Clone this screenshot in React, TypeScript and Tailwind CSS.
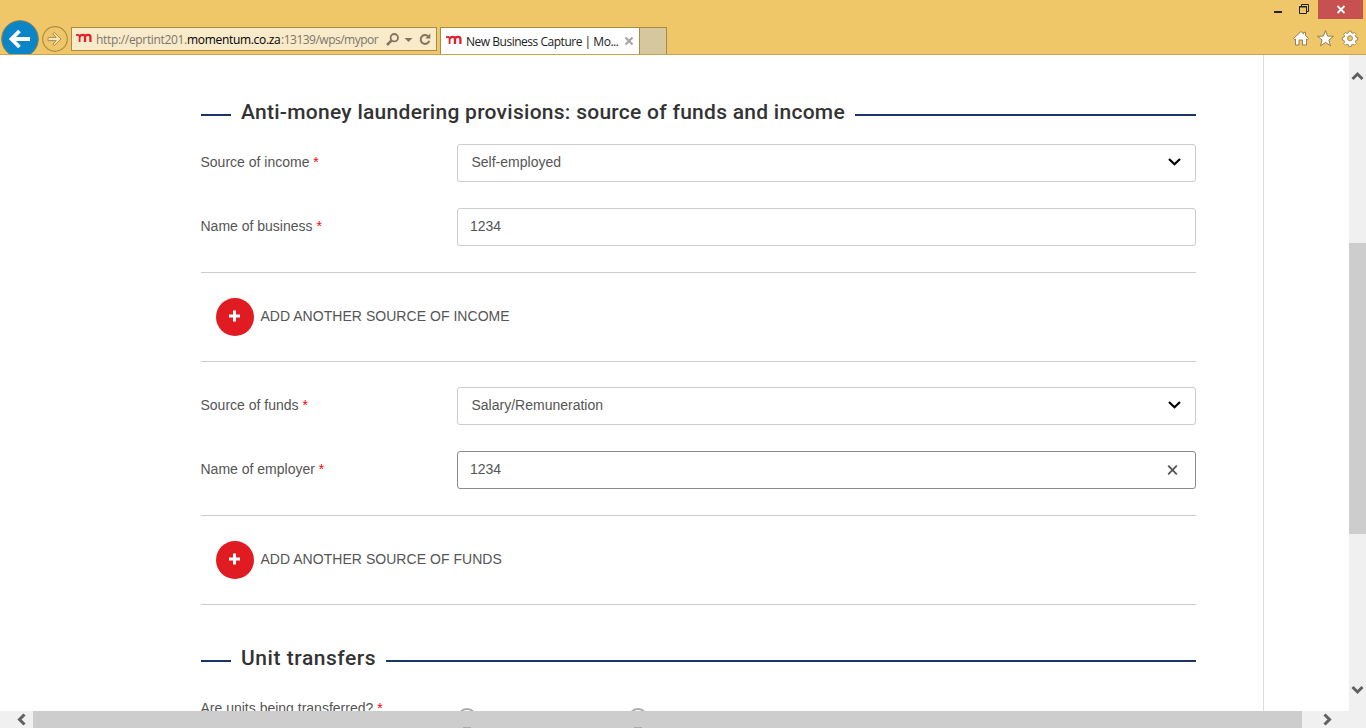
import React from "react";

function MLogo() {
  return (
    <svg width="16" height="16" viewBox="0 0 16 16" className="shrink-0" fill="none" stroke="#e2202c">
      <path d="M0 4.4 C1.4 3.4 3.2 3.6 3.6 5.4 V11" strokeWidth="1.8" />
      <path d="M3.8 5.8 C4.6 3.2 9 3.2 9 6 V11 M9 6 C9.8 3.2 14.4 3.2 14.4 6 V11" strokeWidth="2.3" />
    </svg>
  );
}

function Toolbar() {
  return (
    <header className="relative h-[55px] shrink-0 overflow-hidden border-b border-[#c9a350] bg-[#efc768]">
      <div className="absolute top-0 right-0 flex h-[19px]">
        <svg width="48" height="19" viewBox="1270 0 48 19" fill="none" stroke="#222">
          <path d="M1274 12h8" strokeWidth="2" />
          <path d="M1299.5 6.5h7v7h-7z" />
          <path d="M1299 7h8" strokeWidth="1" />
          <path d="M1301.5 6v-1.5h7v7h-1.5" />
        </svg>
        <div className="w-[45px] bg-[#c75050]">
          <svg width="45" height="19" viewBox="0 0 45 19" fill="none" stroke="#fff" strokeWidth="1.8">
            <path d="M19.5 6l7 7M26.5 6l-7 7" />
          </svg>
        </div>
        <div className="w-[3px]" />
      </div>
      <div className="flex h-[54px] pt-[20px]">
        <svg width="71" height="34" viewBox="0 20 71 34" className="shrink-0" fill="none">
          <circle cx="20" cy="39" r="18.3" fill="#0a85c7" stroke="#8a7c4c" strokeWidth="1" />
          <path d="M30 39H12M19.5 31l-8 8 8 8" stroke="#fff" strokeWidth="3.8" />
          <circle cx="55" cy="39" r="12.3" stroke="#ad8c48" strokeWidth="1.2" />
          <path d="M48 37.4h8.2l-3.4-3.7 1.5-1.3 6.6 6.6-6.6 6.6-1.5-1.3 3.4-3.7H48z" fill="#f8e6bb" stroke="#ae8d49" />
        </svg>
        <div className="mt-[7px] flex h-[24px] w-[366px] shrink-0 items-center border border-[#a98a47] bg-[#f9eaca] pl-[4px]">
          <MLogo />
          <div className="ml-[4px] flex h-[20px] w-[285px] shrink-0 overflow-hidden font-['Open_Sans','Noto_Sans',sans-serif] text-[12px] leading-[21px] whitespace-nowrap text-[#7b776b]">
            <span className="w-[91px] shrink-0 tracking-[-0.33px]">http://eprtint201.</span>
            <span className="w-[94px] shrink-0 tracking-[-0.32px] text-black">momentum.co.za</span>
            <span className="shrink-0 tracking-[-0.5px]">:13139/wps/mypor</span>
          </div>
          <svg width="50" height="22" viewBox="381 28 50 22" fill="none" stroke="#80755e">
            <circle cx="394.3" cy="37.7" r="3.7" strokeWidth="1.8" />
            <path d="M391.6 40.4L387 45" strokeWidth="2.6" />
            <path d="M404.5 38h8l-4 4z" fill="#80755e" stroke="none" />
            <path d="M428.3 36.5a4.4 4.4 0 1 0 1 4.2" strokeWidth="2" />
            <path d="M430.3 33.5v5h-5z" fill="#80755e" stroke="none" />
          </svg>
        </div>
        <div className="mt-[7px] ml-[3px] flex h-[27px] w-[200px] shrink-0 items-center border border-b-0 border-[#a98a47] bg-white pl-[5px]">
          <MLogo />
          <span className="ml-[4px] w-[154px] shrink-0 pt-[2px] font-['Open_Sans','Noto_Sans',sans-serif] text-[12px] leading-[20px] tracking-[-0.48px] whitespace-nowrap text-[#222]">New Business Capture | Mo...</span>
          <svg width="14" height="14" viewBox="0 0 14 14" className="shrink-0" stroke="#a6a6a6" strokeWidth="2.2">
            <path d="M5.5 3.5l7 7M12.5 3.5l-7 7" />
          </svg>
        </div>
        <div className="mt-[7px] h-[27px] w-[27px] border-t border-r border-[#a98a47] bg-[#d7c79f]" />
        <svg width="74" height="34" viewBox="1292 20 74 34" className="ml-auto" fill="#fff" stroke="#94804f">
          <path d="M1293.5 38.5l7.5-7 2.5 2.3v-1.5h2v3.3l3 2.9-1.2 1.2-.8-.7v6h-4v-5h-3.5v5h-3.5v-6l-.8.7z" />
          <path d="M1325.5 30.5l2.1 5.6 5.9.2-4.6 3.7 1.6 5.8-5-3.3-5 3.3 1.6-5.8-4.6-3.7 5.9-.2z" />
          <g transform="translate(1350 38) scale(.87) translate(-1350 -38.7)">
            <path d="M1348.5 30.8h3l.4 2 1.6.7 1.7-1.2 2.1 2.1-1.2 1.7.7 1.6 2 .4v3l-2 .4-.7 1.6 1.2 1.7-2.1 2.1-1.7-1.2-1.6.7-.4 2h-3l-.4-2-1.6-.7-1.7 1.2-2.1-2.1 1.2-1.7-.7-1.6-2-.4v-3l2-.4.7-1.6-1.2-1.7 2.1-2.1 1.7 1.2 1.6-.7z" />
            <circle cx="1350" cy="39" r="2.9" fill="#efc768" />
          </g>
        </svg>
      </div>
    </header>
  );
}

function Heading({ children, className }: { children: React.ReactNode; className: string }) {
  return (
    <div className="flex h-[30px] items-center">
      <div className="mt-[5px] h-[2px] w-[30px] bg-[#1a3668]" />
      <h2 className={"mx-[10px] shrink-0 font-['Roboto',sans-serif] text-[21px] leading-[30px] font-medium whitespace-nowrap text-[#333] " + className}>{children}</h2>
      <div className="mt-[5px] h-[2px] flex-1 bg-[#1a3668]" />
    </div>
  );
}

function Label({ children }: { children: React.ReactNode }) {
  return (
    <label className="-ml-[0.5px] w-[256.5px] shrink-0 leading-[36px]">
      {children} <span className="text-[#f00]">*</span>
    </label>
  );
}

function Field({ label, value, kind = "text" }: { label: string; value: string; kind?: "text" | "select" | "active" }) {
  return (
    <div className="flex h-[38px]">
      <Label>{label}</Label>
      <div className={"flex flex-1 justify-between rounded-[3px] border leading-[34px] " + (kind === "active" ? "border-[#8a8a8a]" : "border-[#ccc]") + (kind === "select" ? " pl-[13.5px]" : " pl-[12px]")}>
        <span>{value}</span>
        {kind === "select" && (
          <svg width="30" height="36" viewBox="0 0 30 36" fill="none" stroke="#000" strokeWidth="2.2">
            <path d="M4 14l5.5 5.3 5.5-5.3" />
          </svg>
        )}
        {kind === "active" && (
          <svg width="30" height="36" viewBox="0 0 30 36" fill="none" stroke="#555" strokeWidth="1.8">
            <path d="M3.2 13.7l8.6 8.6M11.8 13.7l-8.6 8.6" />
          </svg>
        )}
      </div>
    </div>
  );
}

function AddRow({ children }: { children: React.ReactNode }) {
  return (
    <div className="my-[26px] flex h-[90px] items-center border-y border-[#ccc] pl-[15px]">
      <button className="flex items-center gap-[6px]">
        <svg width="38" height="38" viewBox="0 0 38 38">
          <circle cx="19" cy="19" r="19" fill="#e01b22" />
          <path d="M13 18h11M18.5 12.5v11" stroke="#fff" strokeWidth="3" />
        </svg>
        <span className="pb-px pl-[0.4px] tracking-[0.04px]">{children}</span>
      </button>
    </div>
  );
}

function Form() {
  return (
    <main className="w-[1264px] shrink-0 overflow-hidden border-r border-[#ddd] pr-[67px] pl-[201px] pt-[42px]">
      <Heading className="tracking-[0.27px]">Anti-money laundering provisions: source of funds and income</Heading>
      <div className="mt-[17px]">
        <Field label="Source of income" value="Self-employed" kind="select" />
        <div className="h-[26px]" />
        <Field label="Name of business" value="1234" />
        <AddRow>ADD ANOTHER SOURCE OF INCOME</AddRow>
      </div>
      <div className="-mt-px">
        <Field label="Source of funds" value="Salary/Remuneration" kind="select" />
        <div className="h-[26px]" />
        <Field label="Name of employer" value="1234" kind="active" />
        <AddRow>ADD ANOTHER SOURCE OF FUNDS</AddRow>
      </div>
      <div className="mt-[38px]">
        <Heading className="tracking-[0.55px]">Unit transfers</Heading>
      </div>
      <div className="mt-[17px] flex h-[38px]">
        <Label>Are units being transferred?</Label>
        <div className="mt-[18px] h-[20px] w-[20px] rounded-full border-2 border-[#aaa]" />
        <div className="mt-[18px] ml-[151px] h-[20px] w-[20px] rounded-full border-2 border-[#aaa]" />
      </div>
    </main>
  );
}

export default function App() {
  return (
    <div className="flex h-[728px] w-[1366px] flex-col overflow-hidden bg-white font-['Liberation_Sans',Arial,sans-serif] text-[14px] text-[#555]">
      <Toolbar />
      <div className="flex h-[656px] shrink-0 overflow-hidden">
        <Form />
        <div className="ml-auto flex w-[17px] flex-col bg-[#f0f0f0]">
          <svg width="17" height="188" viewBox="0 0 17 188" fill="none" stroke="#606060" strokeWidth="3">
            <path d="M3.5 24l5-5 5 5" />
          </svg>
          <div className="h-[291px] shrink-0 bg-[#cdcdcd]" />
          <svg width="17" height="177" viewBox="0 479 17 177" fill="none" stroke="#606060" strokeWidth="3">
            <path d="M3.5 632l5 5 5-5" />
          </svg>
        </div>
      </div>
      <div className="flex h-[17px] shrink-0 bg-[#f0f0f0]">
        <svg width="33" height="17" viewBox="0 0 33 17" fill="none" stroke="#606060" strokeWidth="3">
          <path d="M24.5 3.5l-5 5 5 5" />
        </svg>
        <div className="flex w-[1269px] items-end bg-[#cdcdcd]">
          <div className="ml-[430px] h-px w-[8px] bg-[#aaa]" />
          <div className="ml-[163px] h-px w-[8px] bg-[#aaa]" />
        </div>
        <svg width="64" height="17" viewBox="0 0 64 17" fill="none" stroke="#606060" strokeWidth="3">
          <path d="M22.5 3.5l5 5-5 5" />
        </svg>
      </div>
    </div>
  );
}
